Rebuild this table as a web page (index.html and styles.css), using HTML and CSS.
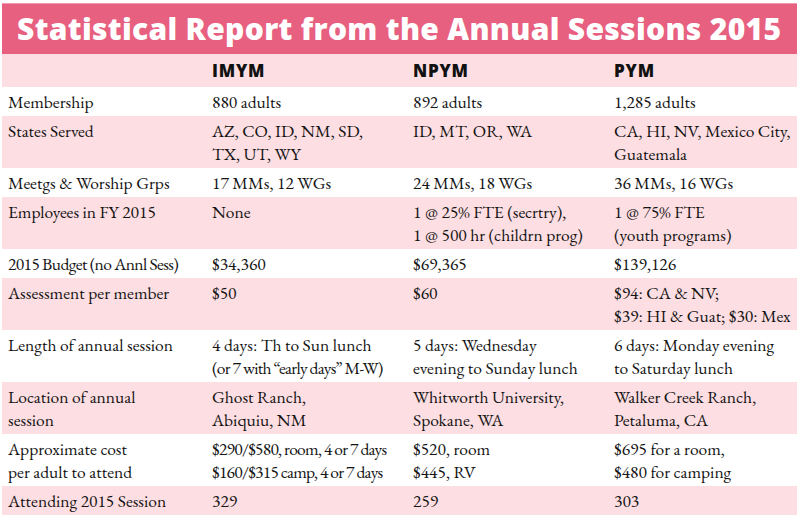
FILE: index.html
```html
<!DOCTYPE html>
<html>
<head>
<meta charset="utf-8">
<link rel="stylesheet" href="styles.css">
</head>
<body>
<div class="report">
  <h1 class="title">Statistical Report from the Annual Sessions 2015</h1>
  <table class="stats">
    <thead>
      <tr class="pink head">
        <th></th><th>IMYM</th><th>NPYM</th><th>PYM</th>
      </tr>
    </thead>
    <tbody>
      <tr><td>Membership</td><td>880 adults</td><td>892 adults</td><td>1,285 adults</td></tr>
      <tr class="pink two"><td>States Served</td><td>AZ, CO, ID, NM, SD,<br>TX, UT, WY</td><td>ID, MT, OR, WA</td><td>CA, HI, NV, Mexico City,<br>Guatemala</td></tr>
      <tr><td>Meetgs &amp; Worship Grps</td><td>17 MMs, 12 WGs</td><td>24 MMs, 18 WGs</td><td>36 MMs, 16 WGs</td></tr>
      <tr class="pink two"><td>Employees in FY 2015</td><td>None</td><td>1 @ 25% FTE (secrtry),<br>1 @ 500 hr (childrn prog)</td><td>1 @ 75% FTE<br>(youth programs)</td></tr>
      <tr><td><span class="tight">2015 Budget (no Annl Sess)</span></td><td>$34,360</td><td>$69,365</td><td>$139,126</td></tr>
      <tr class="pink two"><td>Assessment per member</td><td>$50</td><td>$60</td><td>$94: CA &amp; NV;<br>$39: HI &amp; Guat; $30: Mex</td></tr>
      <tr class="two"><td>Length of annual session</td><td>4 days: Th to Sun lunch<br><span class="tighter">(or 7 with “early days” M-W)</span></td><td>5 days: Wednesday<br>evening to Sunday lunch</td><td>6 days: Monday evening<br>to Saturday lunch</td></tr>
      <tr class="pink two"><td>Location of annual<br>session</td><td>Ghost Ranch,<br>Abiquiu, NM</td><td>Whitworth University,<br>Spokane, WA</td><td>Walker Creek Ranch,<br>Petaluma, CA</td></tr>
      <tr class="two"><td>Approximate cost<br>per adult to attend</td><td><span class="tighter">$290/$580, room, 4 or 7 days<br>$160/$315 camp, 4 or 7 days</span></td><td>$520, room<br>$445, RV</td><td>$695 for a room,<br>$480 for camping</td></tr>
      <tr class="pink"><td>Attending 2015 Session</td><td>329</td><td>259</td><td>303</td></tr>
    </tbody>
  </table>
</div>
</body>
</html>
```
FILE: styles.css
```css
html, body {
  margin: 0;
  padding: 0;
  background: #ffffff;
}

.report {
  padding: 3px 3px 0 2px;
  width: 795px;
}

.title {
  margin: 0;
  height: 50px;
  background: #e8607f;
  border-top: 1px solid #f29bb0;
  color: #ffffff;
  font-family: "Open Sans", Lato, sans-serif;
  font-weight: 800;
  font-size: 30px;
  line-height: 50px;
  padding-left: 15px;
  letter-spacing: 0.32px;
  white-space: nowrap;
}

.stats {
  width: 795px;
  border-collapse: collapse;
  table-layout: fixed;
}

.stats td {
  font-family: "EB Garamond", "Liberation Serif", serif;
  font-size: 17.5px;
  font-weight: 400;
  color: #141414;
  padding: 3px 0 3px 6px;
  line-height: 23px;
  text-align: left;
  vertical-align: top;
  white-space: nowrap;
}

.stats th {
  font-family: "Open Sans", Lato, sans-serif;
  font-weight: 800;
  font-size: 17px;
  letter-spacing: 0.8px;
  color: #111111;
  text-align: left;
  vertical-align: top;
  height: 31px;
  line-height: 32px;
  padding: 1px 0 0 6px;
  white-space: nowrap;
}

.stats th:first-child,
.stats td:first-child {
  width: 198px;
}

.stats th:nth-child(2),
.stats td:nth-child(2),
.stats th:nth-child(3),
.stats td:nth-child(3) {
  width: 195px;
}

.pink {
  background: #fddee2;
}

.tight {
  letter-spacing: -0.6px;
}

.tighter {
  letter-spacing: -0.75px;
}
```
